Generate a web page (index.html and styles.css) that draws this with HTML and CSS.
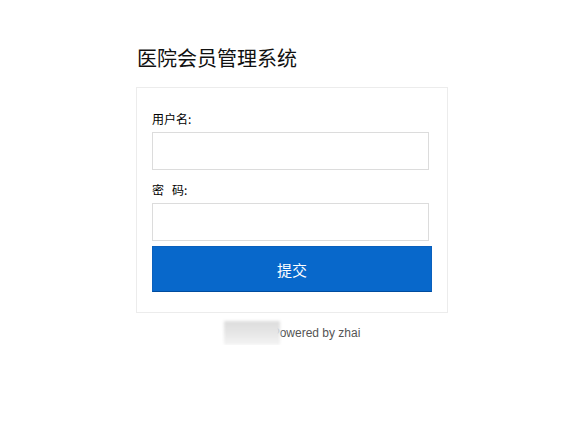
FILE: index.html
```html
<!DOCTYPE html>
<html>
  <head>
    <meta charset="utf-8">
    <title>医院会员管理系统</title>
    <link rel="stylesheet" href="styles.css">
  </head>
  <body>
    <div class="wrap">
      <h1>医院会员管理系统</h1>
      <form class="login">
        <label for="username">用户名:</label>
        <input type="text" id="username" name="username">
        <label for="password">密&nbsp;&nbsp;&nbsp;码:</label>
        <input type="password" id="password" name="password">
        <button type="button">提交</button>
      </form>
      <p class="footer">
        <span class="smudge"></span><span class="credit">Powered by zhai</span>
      </p>
    </div>
  </body>
</html>
```
FILE: styles.css
```css
body {
  margin: 0;
  background-color: #fff;
  color: #000;
  font-family: "Liberation Sans", "Noto Sans CJK SC", sans-serif;
}

.wrap {
  width: 312px;
  margin: 46px 0 0 136px;
}

h1 {
  margin: 0 0 17px 1px;
  font-size: 20px;
  line-height: 24px;
  font-weight: normal;
  color: #111;
  font-family: "Noto Sans CJK SC", sans-serif;
}

.login {
  display: flex;
  flex-direction: column;
  align-items: flex-start;
  padding: 23px 15px 20px;
  border: 1px solid #ececec;
  margin: 0;
}

.login label {
  font-size: 12px;
  line-height: 16px;
  font-family: "Noto Sans CJK SC", sans-serif;
  color: #000;
  margin-bottom: 5px;
}

.login input {
  box-sizing: border-box;
  width: 277px;
  height: 38px;
  border: 1px solid #dcdcdc;
  margin: 0 0 12px;
  padding: 0 8px;
  font-size: 14px;
}

.login input#password {
  margin-bottom: 5px;
}

.login button {
  box-sizing: border-box;
  width: 280px;
  height: 46px;
  background-color: #0868cb;
  border: 1px solid #0a60bd;
  border-bottom-color: #004c9e;
  color: #fff;
  font-size: 15px;
  font-family: "Noto Sans CJK SC", sans-serif;
  cursor: pointer;
}

.footer {
  margin: 12px 0 0;
  text-align: center;
  font-size: 12px;
  line-height: 16px;
  color: #555;
}

.smudge {
  position: relative;
  z-index: 1;
  display: inline-block;
  vertical-align: top;
  width: 56px;
  height: 24px;
  margin-top: -4px;
  background: linear-gradient(to bottom, #dcdcdc 0%, #e6e6e6 50%, #f4f4f4 100%);
  filter: blur(1.5px);
}

.credit {
  margin-left: -8px;
}
```
